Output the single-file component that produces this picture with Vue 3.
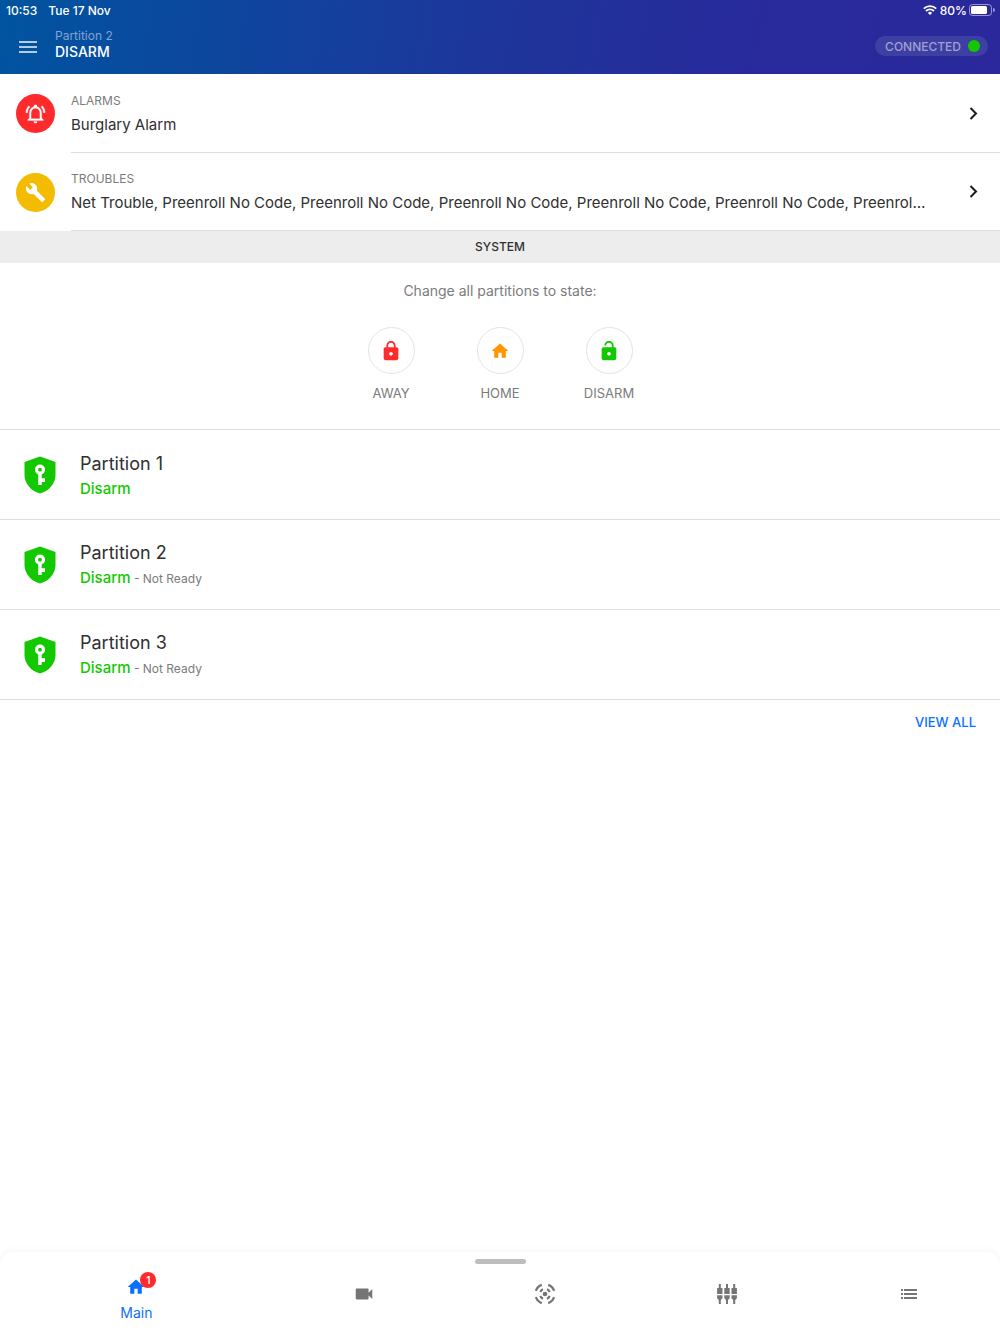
<script setup>
import { ref } from 'vue';

const events = [
  { title: 'ALARMS', kind: 'alarm', text: 'Burglary Alarm' },
  { title: 'TROUBLES', kind: 'trouble', text: 'Net Trouble' + ', Preenroll No Code'.repeat(8) }
];

const states = [
  { name: 'AWAY', css: 'away', icon: 'M18 8h-1V6c0-2.76-2.24-5-5-5S7 3.24 7 6v2H6c-1.1 0-2 .9-2 2v10c0 1.1.9 2 2 2h12c1.1 0 2-.9 2-2V10c0-1.1-.9-2-2-2zm-6 9c-1.1 0-2-.9-2-2s.9-2 2-2 2 .9 2 2-.9 2-2 2zm3.1-9H8.9V6c0-1.71 1.39-3.1 3.1-3.1s3.1 1.39 3.1 3.1v2z' },
  { name: 'HOME', css: 'home', icon: 'M10 20v-6h4v6h5v-8h3L12 3 2 12h3v8z' },
  { name: 'DISARM', css: 'disarm', icon: 'M18 8h-1V6c0-2.76-2.24-5-5-5S7 3.24 7 6h1.9c0-1.71 1.39-3.1 3.1-3.1s3.1 1.39 3.1 3.1v2H6c-1.1 0-2 .9-2 2v10c0 1.1.9 2 2 2h12c1.1 0 2-.9 2-2V10c0-1.1-.9-2-2-2zm-6 9c-1.1 0-2-.9-2-2s.9-2 2-2 2 .9 2 2-.9 2-2 2z' }
];

const partitions = [
  { name: 'Partition 1', state: 'Disarm', ready: true },
  { name: 'Partition 2', state: 'Disarm', ready: false },
  { name: 'Partition 3', state: 'Disarm', ready: false }
];

const tabs = ['Main', 'Cameras', 'Devices', 'Automation', 'Events'];
const activeTab = ref('Main');
</script>

<template>
  <div class="page">
    <header>
      <div class="status">
        <span>10:53</span>
        <span class="date">Tue 17 Nov</span>
        <svg class="wifi" width="14" height="10" viewBox="0 0 14 10" fill="none" stroke="#fff" stroke-width="1.8">
          <path d="M.8 3.7a8.8 8.8 0 0 1 12.4 0M3 6a5.7 5.7 0 0 1 8 0" />
          <path d="M7 10L4.9 7.9a3 3 0 0 1 4.2 0z" fill="#fff" stroke="none" />
        </svg>
        <span>80%</span>
        <svg width="26" height="12" viewBox="0 0 26 12">
          <rect x=".5" y=".5" width="22" height="11" rx="3" fill="none" stroke="#fff" stroke-opacity=".5" />
          <rect x="2" y="2" width="16" height="8" rx="1.5" fill="#fff" />
          <path d="M24 4v4a2 2 0 0 0 0-4z" fill="#fff" fill-opacity=".5" />
        </svg>
      </div>
      <div class="bar">
        <button class="menu" aria-label="Menu">
          <svg width="18" height="12" viewBox="0 0 18 12"><path d="M0 0h18v2H0zM0 5h18v2H0zM0 10h18v2H0z" fill="currentColor" /></svg>
        </button>
        <div class="current">
          <small>Partition 2</small>
          <h1>DISARM</h1>
        </div>
        <div class="connection">CONNECTED <i></i></div>
      </div>
    </header>

    <main>
      <button v-for="event in events" class="event">
        <span class="avatar" :class="event.kind">
          <svg v-if="event.kind === 'alarm'" width="21" height="21" viewBox="0 0 24 24" fill="#fff" stroke="#fff" stroke-width=".3">
            <path d="M10,21H14A2,2 0 0,1 12,23A2,2 0 0,1 10,21M21,19V20H3V19L5,17V11C5,7.9 7.03,5.17 10,4.29C10,4.19 10,4.1 10,4A2,2 0 0,1 12,2A2,2 0 0,1 14,4C14,4.1 14,4.19 14,4.29C16.97,5.17 19,7.9 19,11V17L21,19M17,11A5,5 0 0,0 12,6A5,5 0 0,0 7,11V18H17V11M19.75,3.19L18.33,4.61C20.04,6.3 21,8.6 21,11H23C23,8.07 21.84,5.25 19.75,3.19M1,11H3C3,8.6 3.96,6.3 5.67,4.61L4.25,3.19C2.16,5.25 1,8.07 1,11Z" />
          </svg>
          <svg v-else width="21" height="21" viewBox="0 0 24 24" fill="#fff">
            <path d="M22.7 19l-9.1-9.1c.9-2.3.4-5-1.5-6.9-2-2-5-2.4-7.4-1.3L9 6 6 9 1.6 4.7C.4 7.1.9 10.1 2.9 12.1c1.9 1.9 4.6 2.4 6.9 1.5l9.1 9.1c.4.4 1 .4 1.4 0l2.3-2.3c.5-.4.5-1.1.1-1.4z" />
          </svg>
        </span>
        <span class="body">
          <span class="texts">
            <span class="label">{{ event.title }}</span>
            <span class="value">{{ event.text }}</span>
          </span>
          <svg class="chevron" width="9" height="13" viewBox="0 0 9 13" fill="none" stroke="#1c1c1c" stroke-width="2"><path d="M1.5 1l5.5 5.5L1.5 12" /></svg>
        </span>
      </button>

      <h2>SYSTEM</h2>
      <section class="system">
        <p>Change all partitions to state:</p>
        <div class="states">
          <button v-for="state in states" :class="state.css">
            <span class="circle">
              <svg :width="state.css === 'home' ? 20 : 22" :height="state.css === 'home' ? 20 : 22" viewBox="0 0 24 24" fill="currentColor"><path :d="state.icon" /></svg>
            </span>
            <span>{{ state.name }}</span>
          </button>
        </div>
      </section>

      <button v-for="partition in partitions" class="partition">
        <svg width="32" height="38" viewBox="0 0 32 38">
          <path d="M16 .5L31.5 6v13c0 8-6 16-15.5 18.5C6.5 35 .5 27 .5 19V6z" fill="#13c800" />
          <circle cx="16" cy="13.7" r="3.5" fill="none" stroke="#fff" stroke-width="3.2" />
          <path d="M14.2 17.5h3.5v4.8H21V26h-3.3v3h-3.5z" fill="#fff" />
        </svg>
        <span class="info">
          <span class="name">{{ partition.name }}</span>
          <span class="state"><b>{{ partition.state }}</b><small v-if="!partition.ready"> - Not Ready</small></span>
        </span>
      </button>

      <a href="#" class="all">VIEW ALL</a>
    </main>

    <nav>
      <div class="handle"></div>
      <div class="tabs">
        <button v-for="tab in tabs" :class="{ active: tab === activeTab }" :aria-label="tab" @click="activeTab = tab">
          <span class="icon">
            <svg v-if="tab === 'Main'" width="20" height="20" viewBox="0 0 24 24" fill="currentColor"><path d="M10 20v-6h4v6h5v-8h3L12 3 2 12h3v8z" /></svg>
            <svg v-else-if="tab === 'Cameras'" width="22" height="22" viewBox="0 0 24 24" fill="currentColor"><path d="M17 10.5V7c0-.55-.45-1-1-1H4c-.55 0-1 .45-1 1v10c0 .55.45 1 1 1h12c.55 0 1-.45 1-1v-3.5l4 4v-11l-4 4z" /></svg>
            <svg v-else-if="tab === 'Devices'" width="24" height="24" viewBox="0 0 24 24" fill="none" stroke="currentColor" stroke-width="2.2">
              <circle cx="12" cy="12" r="2.3" fill="currentColor" stroke="none" />
              <path d="M15.2 2.9a9.5 9.5 0 0 1 5.9 5.9M21.1 15.2a9.5 9.5 0 0 1-5.9 5.9M8.8 21.1a9.5 9.5 0 0 1-5.9-5.9M2.9 8.8a9.5 9.5 0 0 1 5.9-5.9" />
              <path d="M14 7.3a5.1 5.1 0 0 1 2.7 2.7M16.7 14a5.1 5.1 0 0 1-2.7 2.7M10 16.7A5.1 5.1 0 0 1 7.3 14M7.3 10A5.1 5.1 0 0 1 10 7.3" />
            </svg>
            <svg v-else-if="tab === 'Automation'" width="24" height="24" viewBox="0 0 24 24" fill="currentColor">
              <path v-for="x in [2.1, 9.3, 16.5]" :transform="`translate(${x} 0)`" d="M1.7 2h2v4h1.7v6H0V6h1.7zM0 13.3h5.4v3l-1.7 1.700v4h-2v-4L0 16.300z" />
            </svg>
            <svg v-else width="16" height="10" viewBox="0 0 16 10" fill="currentColor"><path d="M0 0h2v2H0zM3 0h13v2H3zM0 4h2v2H0zM3 4h13v2H3zM0 8h2v2H0zM3 8h13v2H3z" /></svg>
            <em v-if="tab === 'Main'">1</em>
          </span>
          <span v-if="tab === activeTab">{{ tab }}</span>
        </button>
      </div>
    </nav>
  </div>
</template>

<style>
body {
  background: #fff;
}
</style>

<style scoped>
* {
  box-sizing: border-box;
}

.page {
  display: flex;
  flex-direction: column;
  min-height: 100vh;
  font-family: Inter, "Liberation Sans", sans-serif;
  color: #303030;
}

button {
  padding: 0;
  border: 0;
  background: none;
  font: inherit;
  color: inherit;
  text-align: left;
  cursor: pointer;
}

svg {
  display: block;
  flex: none;
}

header {
  height: 74px;
  background: linear-gradient(100deg, #0054a0 0%, #1e359b 50%, #282a9b 75%, #2a289b 100%);
  color: #fff;
}

.status {
  display: flex;
  align-items: center;
  height: 20px;
  padding: 0 5px 0 6px;
  font-size: 12px;
  font-weight: 500;
}

.date {
  margin-left: 11px;
}

.wifi {
  margin-left: auto;
  margin-right: 3px;
}

.status svg:last-child {
  margin-left: 2px;
}

.bar {
  display: flex;
  align-items: center;
  height: 50px;
  padding: 0 12px 0 19px;
}

.menu {
  padding: 4px 0 0;
  color: #b4cbe4;
}

.current {
  flex: 1;
  margin-left: 18px;
}

.current small {
  display: block;
  font-size: 12px;
  line-height: 14px;
  color: #83a3d0;
}

h1 {
  margin: 0;
  font-size: 14px;
  font-weight: 500;
  line-height: 18px;
}

.connection {
  display: flex;
  align-items: center;
  gap: 7px;
  height: 20px;
  margin-top: 2px;
  padding: 0 8px 0 10px;
  border-radius: 10px;
  background: #3e3fa3;
  color: #a09fd2;
  font-size: 12px;
  font-weight: 500;
}

.connection i {
  width: 12px;
  height: 12px;
  border-radius: 50%;
  background: #13c800;
}

main {
  flex: 1;
  display: flex;
  flex-direction: column;
}

.event {
  display: flex;
  height: 79px;
  padding-left: 16px;
}

.event + .event {
  height: 78px;
}

.avatar {
  display: flex;
  flex: none;
  align-items: center;
  justify-content: center;
  align-self: center;
  width: 39px;
  height: 39px;
  border-radius: 50%;
}

.alarm {
  background: #ff2a2c;
}

.trouble {
  background: #f4bc00;
}

.body {
  display: flex;
  flex: 1;
  align-items: center;
  min-width: 0;
  height: 100%;
  margin-left: 16px;
  padding-right: 22px;
  border-bottom: 1px solid #dedede;
}

.texts {
  flex: 1;
  min-width: 0;
  padding-top: 3px;
}

.label {
  display: block;
  font-size: 12px;
  line-height: 20px;
  color: #7b7b7b;
}

.value {
  display: block;
  overflow: hidden;
  font-size: 15px;
  line-height: 28px;
  text-overflow: ellipsis;
  white-space: nowrap;
}

.chevron {
  margin-left: 40px;
}

h2 {
  margin: 0;
  background: #ededed;
  font-size: 12px;
  font-weight: 500;
  line-height: 32px;
  text-align: center;
}

.system {
  padding: 18px 0 26px;
  border-bottom: 1px solid #dedede;
  color: #7b7b7b;
  text-align: center;
}

.system p {
  margin: 0 0 26px;
  font-size: 14px;
  line-height: 20px;
}

.states {
  display: flex;
  justify-content: center;
}

.states button {
  display: flex;
  flex-direction: column;
  align-items: center;
  gap: 9px;
  width: 109px;
  font-size: 13px;
  line-height: 20px;
}

.circle {
  display: flex;
  align-items: center;
  justify-content: center;
  width: 47px;
  height: 47px;
  border: 1px solid #e4e4e4;
  border-radius: 50%;
}

.away .circle {
  color: #ff2a2c;
}

.home .circle {
  color: #ff9500;
}

.disarm .circle {
  color: #13c800;
}

.partition {
  display: flex;
  align-items: center;
  gap: 24px;
  height: 90px;
  padding: 0 24px;
  border-bottom: 1px solid #dedede;
}

.info {
  padding-top: 2px;
}

.name {
  display: block;
  font-size: 18px;
  line-height: 26px;
}

.state {
  display: block;
  font-size: 15px;
  line-height: 24px;
}

.state b {
  color: #13c800;
  font-weight: 500;
}

.state small {
  color: #7b7b7b;
  font-size: 12px;
}

.all {
  align-self: flex-end;
  padding: 12px 24px;
  color: #0a70ff;
  font-size: 13px;
  font-weight: 500;
  line-height: 20px;
  text-decoration: none;
}

nav {
  height: 82px;
  padding-top: 7px;
  border-radius: 14px 14px 0 0;
  background: #fff;
  box-shadow: 0 0 10px rgba(0, 0, 0, 0.06);
}

.handle {
  width: 51px;
  height: 5px;
  margin: 0 auto;
  border-radius: 3px;
  background: #bdbdbd;
}

.tabs {
  display: flex;
  height: 60px;
}

.tabs button {
  display: flex;
  flex: 2 0 0;
  flex-direction: column;
  align-items: center;
  justify-content: center;
  gap: 6px;
  color: #757575;
  font-size: 14px;
  line-height: 20px;
}

.tabs .active {
  flex: 3 0 0;
  padding-top: 12px;
  color: #0a70ff;
}

.icon {
  position: relative;
}

.icon em {
  position: absolute;
  top: -5px;
  left: 14px;
  width: 16px;
  height: 16px;
  border-radius: 50%;
  background: #ff2a2c;
  color: #fff;
  font-size: 10px;
  font-style: normal;
  font-weight: 600;
  line-height: 16px;
  text-align: center;
}
</style>
